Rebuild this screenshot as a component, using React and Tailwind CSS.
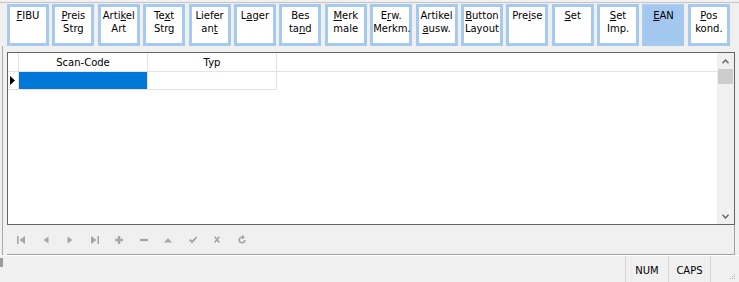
import React from "react";

const buttons = [
  "&FIBU",
  "&Preis|Strg",
  "Arti&kel|Art",
  "Te&xt|Strg",
  "Liefer|an&t",
  "L&ager",
  "Bes|ta&nd",
  "&Merk|male",
  "E&rw.|Merkm.",
  "Artikel|&ausw.",
  "&Button|Layout",
  "Pre&ise",
  "&Set",
  "&Set|Imp.",
  "&EAN",
  "&Pos|kond.",
];

// "&x" marks the mnemonic letter, like a Windows caption
function Caption({ text }) {
  return text.split("|").map((line, i) => {
    const at = line.indexOf("&");
    if (at < 0) return <div key={i}>{line}</div>;
    return (
      <div key={i}>
        {line.slice(0, at)}
        <u className="underline-offset-[1px]">{line[at + 1]}</u>
        {line.slice(at + 2)}
      </div>
    );
  });
}

const navIcons = [
  // first
  <>
    <rect x="1" y="1" width="1.6" height="8" />
    <path d="M9 1 L3.5 5 L9 9 Z" />
  </>,
  // prior
  <path d="M7.5 1.5 L2.5 5 L7.5 8.5 Z" />,
  // next
  <path d="M2.5 1.5 L7.5 5 L2.5 8.5 Z" />,
  // last
  <>
    <path d="M1 1 L6.5 5 L1 9 Z" />
    <rect x="7.4" y="1" width="1.6" height="8" />
  </>,
  // insert
  <path d="M3.8 1 H6.2 V3.8 H9 V6.2 H6.2 V9 H3.8 V6.2 H1 V3.8 H3.8 Z" />,
  // delete
  <rect x="1" y="3.9" width="8" height="2.2" />,
  // edit
  <path d="M1 7.5 L5 3 L9 7.5 Z" />,
  // post
  <path d="M1 5.2 L2.4 3.9 L4 5.6 L8 1.6 L9.2 2.8 L4 8.4 Z" />,
  // cancel
  <path d="M2 2.2 L3.2 1.2 L5 3.2 L6.8 1.2 L8 2.2 L6 4.6 L8 7 L6.8 8 L5 5.9 L3.2 8 L2 7 L4 4.6 Z" />,
  // refresh
  <path d="M5 1.4 A3.6 3.6 0 1 0 8.6 5 H7 A2 2 0 1 1 5 3 V4.6 L8 2.2 L5 -0.2 Z" />,
];

export default function App() {
  return (
    <div className="w-[739px] h-[282px] bg-[#f0f0f0] flex flex-col overflow-hidden text-black font-['DejaVu_Sans',sans-serif] text-[10px] leading-[13px]">
      {/* top edge */}
      <div className="h-[2px] shrink-0" />
      <div className="h-px bg-[#c4c4c4] shrink-0" />

      {/* Tab buttons */}
      <div className="h-[43px] pt-px pl-[7px] flex gap-[3.4px] shrink-0">
        {buttons.map((b) => (
          <div
            key={b}
            className={`w-[42px] h-[42px] shrink-0 border-[3px] border-[#a6c9ee] pt-[2px] text-center ${
              b === "&EAN" ? "bg-[#a3c8ef]" : "bg-white"
            }`}
          >
            <Caption text={b} />
          </div>
        ))}
      </div>

      {/* Grid panel */}
      <div className="ml-[2px] w-[733px] h-[209px] border-l border-[#a8a8a8] pt-[6px] pl-[4px] shrink-0">
        <div className="w-[728px] h-[173px] border border-[#646464] bg-white flex">
          <div className="flex-1">
            <div className="flex h-[19px] border-b border-[#e4e4e4]">
              <div className="w-[11px] border-r border-[#e4e4e4]" />
              <div className="w-[129px] border-r border-[#e4e4e4] flex items-center justify-center">
                Scan-Code
              </div>
              <div className="w-[129px] border-r border-[#e4e4e4] flex items-center justify-center">
                Typ
              </div>
            </div>
            <div className="flex h-[18px] w-[269px] border-b border-[#e4e4e4]">
              <div className="w-[11px] border-r border-[#e4e4e4] flex items-center pl-[2px]">
                <svg width="5" height="9" viewBox="0 0 5 9">
                  <path d="M0 0 L5 4.5 L0 9 Z" fill="#000" />
                </svg>
              </div>
              <div className="w-[129px] bg-[#0078d7] border-r border-[#e4e4e4]" />
              <div className="w-[129px] border-r border-[#e4e4e4]" />
            </div>
          </div>

          {/* vertical scrollbar */}
          <div className="w-[17px] bg-[#f0f0f0] flex flex-col">
            <div className="h-[16px] flex items-center justify-center">
              <svg width="7" height="5" viewBox="0 0 7 5">
                <path d="M0.5 4.3 L3.5 1 L6.5 4.3" fill="none" stroke="#606060" strokeWidth="1.3" />
              </svg>
            </div>
            <div className="h-[15px] mx-px bg-[#cdcdcd]" />
            <div className="flex-1" />
            <div className="h-[16px] flex items-center justify-center">
              <svg width="7" height="5" viewBox="0 0 7 5">
                <path d="M0.5 0.7 L3.5 4 L6.5 0.7" fill="none" stroke="#606060" strokeWidth="1.3" />
              </svg>
            </div>
          </div>
        </div>

        {/* navigator */}
        <div className="w-[728px] h-[30px] border-r border-b border-[#a0a0a0] flex items-center pl-[2px] pt-px">
          {navIcons.map((icon, i) => (
            <div key={i} className="w-[24.5px] flex justify-center">
              <svg width="10" height="10" viewBox="0 0 10 10" fill="#a6a6a6" overflow="visible">
                {icon}
              </svg>
            </div>
          ))}
        </div>
      </div>

      {/* Status bar */}
      <div className="h-[27px] flex border-t border-white shrink-0">
        <div className="w-[3px] h-[9px] mt-[2px] bg-[#9c9c9c]" />
        <div className="flex-1" />
        <div className="w-[43px] border-l border-[#d6d6d6] flex items-center justify-center pt-[2px]">
          NUM
        </div>
        <div className="w-[42px] border-l border-[#d6d6d6] flex items-center justify-center pt-[2px]">
          CAPS
        </div>
        <div className="w-[29px] border-l border-[#d6d6d6] flex items-end justify-end pr-[3px] pb-[2px]">
          <svg width="7" height="7" viewBox="0 0 7 7" fill="#b4b4b4">
            <rect x="5" y="1" width="1" height="1" />
            <rect x="3" y="3" width="1" height="1" />
            <rect x="5" y="3" width="1" height="1" />
            <rect x="1" y="5" width="1" height="1" />
            <rect x="3" y="5" width="1" height="1" />
            <rect x="5" y="5" width="1" height="1" />
          </svg>
        </div>
      </div>
    </div>
  );
}
